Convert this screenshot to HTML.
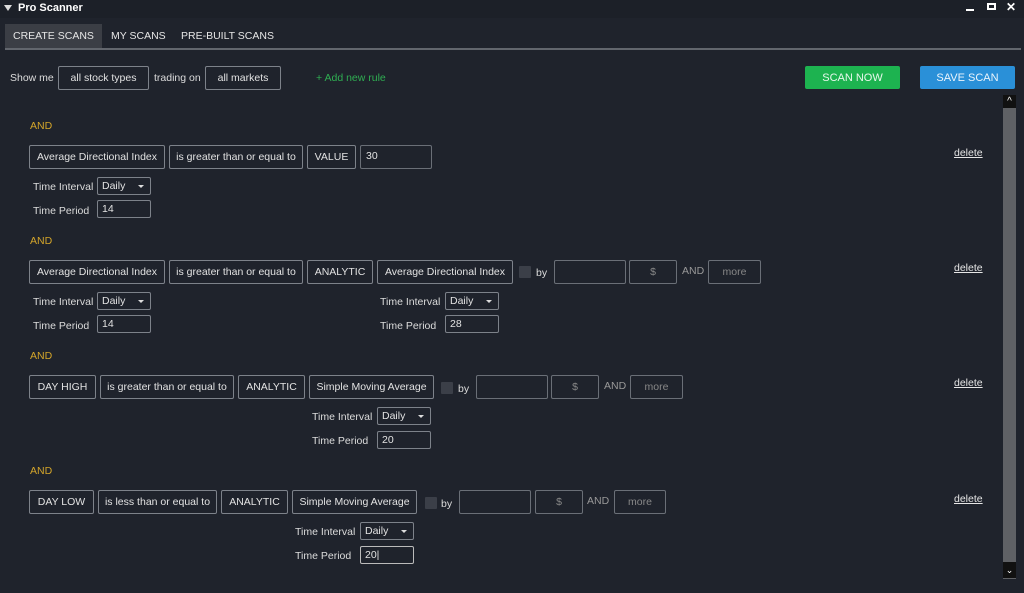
<!DOCTYPE html>
<html><head><style>
*{margin:0;padding:0;box-sizing:border-box}
body{width:1024px;height:593px;background:#1f232c;font-family:"Liberation Sans",sans-serif;color:#dcdcdc;font-size:10.5px;position:relative;overflow:hidden}
.a{position:absolute}
.b{position:absolute;border:1px solid #7d828a;border-radius:2px;height:24px;line-height:23px;text-align:center;white-space:nowrap;color:#e2e2e2}
.in{position:absolute;border:1px solid #6a6f77;border-radius:2px;height:24px;line-height:23px;text-align:center;color:#888}
.s{position:absolute;border:1px solid #7d828a;border-radius:2px;height:18px;line-height:17px;padding-left:4px;color:#e2e2e2;width:54px}
.s.sel:after{content:"";position:absolute;right:6px;top:7px;border-left:3px solid transparent;border-right:3px solid transparent;border-top:3px solid #ddd}
.l{position:absolute;color:#dcdcdc}
.and{position:absolute;color:#d4a52a;left:30px}
.cb{position:absolute;width:12px;height:12px;background:#3b3f48;border-radius:1px}
.del{position:absolute;left:954px;text-decoration:underline;color:#e6e6e6}
</style></head><body>
<div class="a" style="left:0;top:0;width:1024px;height:18px;background:#1c2028"></div>
<div class="a" style="left:4px;top:5px;border-left:4px solid transparent;border-right:4px solid transparent;border-top:6px solid #ddd"></div>
<div class="a" style="left:18px;top:2px;font-weight:bold;font-size:11px;color:#fff">Pro Scanner</div>
<div class="a" style="left:966px;top:9px;width:8px;height:2px;background:#fff"></div>
<div class="a" style="left:987px;top:3px;width:9px;height:7px;border:2px solid #fff"></div>
<div class="a" style="left:1006px;top:0px;color:#fff;font-weight:bold;font-size:12px">✕</div>
<div class="a" style="left:5px;top:24px;width:97px;height:24px;background:#3b3e45"></div>
<div class="a" style="left:13px;top:30px;color:#e6e6e6">CREATE SCANS</div>
<div class="a" style="left:111px;top:30px;color:#e6e6e6">MY SCANS</div>
<div class="a" style="left:181px;top:30px;color:#e6e6e6">PRE-BUILT SCANS</div>
<div class="a" style="left:5px;top:48px;width:1016px;height:2px;background:#62666d"></div>
<div class="l" style="left:10px;top:72px">Show me</div>
<div class="b" style="left:58px;top:66px;width:91px">all stock types</div>
<div class="l" style="left:154px;top:72px">trading on</div>
<div class="b" style="left:205px;top:66px;width:76px">all markets</div>
<div class="a" style="left:316px;top:72px;color:#2fae52">+ Add new rule</div>
<div class="a" style="left:805px;top:66px;width:95px;height:23px;background:#1db350;border-radius:2px;text-align:center;line-height:23px;padding-top:1px;color:#e8f8ec;font-size:11px">SCAN NOW</div>
<div class="a" style="left:920px;top:66px;width:95px;height:23px;background:#2a90d8;border-radius:2px;text-align:center;line-height:23px;padding-top:1px;color:#eaf4fc;font-size:11px">SAVE SCAN</div>
<div class="a" style="left:1003px;top:95px;width:13px;height:484px;background:#5f6165"></div>
<div class="a" style="left:1003px;top:95px;width:13px;height:13px;background:#111;color:#fff;text-align:center;font-size:10px;line-height:14px">&#94;</div>
<div class="a" style="left:1003px;top:562px;width:13px;height:16px;background:#111;color:#fff;text-align:center;font-size:9px;line-height:16px">&#8964;</div>

<div class="and" style="top:120px">AND</div>
<div class="b" style="left:29px;top:145px;width:136px">Average Directional Index</div>
<div class="b" style="left:169px;top:145px;width:134px">is greater than or equal to</div>
<div class="b" style="left:307px;top:145px;width:49px">VALUE</div>
<div class="in" style="left:360px;top:145px;width:72px;text-align:left;padding-left:5px;color:#e2e2e2;line-height:20px">30</div>
<div class="l" style="left:33px;top:181px">Time Interval</div><div class="s sel" style="left:97px;top:177px">Daily</div>
<div class="l" style="left:33px;top:205px">Time Period</div><div class="s" style="left:97px;top:200px">14</div>
<div class="del" style="top:147px">delete</div>

<div class="and" style="top:235px">AND</div>
<div class="b" style="left:29px;top:260px;width:136px">Average Directional Index</div>
<div class="b" style="left:169px;top:260px;width:134px">is greater than or equal to</div>
<div class="b" style="left:307px;top:260px;width:66px">ANALYTIC</div>
<div class="b" style="left:377px;top:260px;width:136px">Average Directional Index</div>
<div class="cb" style="left:519px;top:266px"></div><div class="l" style="left:536px;top:267px">by</div>
<div class="in" style="left:554px;top:260px;width:72px"></div>
<div class="in" style="left:629px;top:260px;width:48px">$</div>
<div class="l" style="left:682px;top:265px;color:#999">AND</div>
<div class="in" style="left:708px;top:260px;width:53px">more</div>
<div class="l" style="left:33px;top:296px">Time Interval</div><div class="s sel" style="left:97px;top:292px">Daily</div>
<div class="l" style="left:33px;top:320px">Time Period</div><div class="s" style="left:97px;top:315px">14</div>
<div class="l" style="left:380px;top:296px">Time Interval</div><div class="s sel" style="left:445px;top:292px">Daily</div>
<div class="l" style="left:380px;top:320px">Time Period</div><div class="s" style="left:445px;top:315px">28</div>
<div class="del" style="top:262px">delete</div>

<div class="and" style="top:350px">AND</div>
<div class="b" style="left:29px;top:375px;width:67px">DAY HIGH</div>
<div class="b" style="left:100px;top:375px;width:134px">is greater than or equal to</div>
<div class="b" style="left:238px;top:375px;width:67px">ANALYTIC</div>
<div class="b" style="left:309px;top:375px;width:125px">Simple Moving Average</div>
<div class="cb" style="left:441px;top:382px"></div><div class="l" style="left:458px;top:383px">by</div>
<div class="in" style="left:476px;top:375px;width:72px"></div>
<div class="in" style="left:551px;top:375px;width:48px">$</div>
<div class="l" style="left:604px;top:380px;color:#999">AND</div>
<div class="in" style="left:630px;top:375px;width:53px">more</div>
<div class="l" style="left:312px;top:411px">Time Interval</div><div class="s sel" style="left:377px;top:407px">Daily</div>
<div class="l" style="left:312px;top:435px">Time Period</div><div class="s" style="left:377px;top:431px">20</div>
<div class="del" style="top:377px">delete</div>

<div class="and" style="top:465px">AND</div>
<div class="b" style="left:29px;top:490px;width:65px">DAY LOW</div>
<div class="b" style="left:98px;top:490px;width:119px">is less than or equal to</div>
<div class="b" style="left:221px;top:490px;width:67px">ANALYTIC</div>
<div class="b" style="left:292px;top:490px;width:125px">Simple Moving Average</div>
<div class="cb" style="left:425px;top:497px"></div><div class="l" style="left:441px;top:498px">by</div>
<div class="in" style="left:459px;top:490px;width:72px"></div>
<div class="in" style="left:535px;top:490px;width:48px">$</div>
<div class="l" style="left:587px;top:495px;color:#999">AND</div>
<div class="in" style="left:614px;top:490px;width:52px">more</div>
<div class="l" style="left:295px;top:526px">Time Interval</div><div class="s sel" style="left:360px;top:522px">Daily</div>
<div class="l" style="left:295px;top:550px">Time Period</div><div class="s" style="left:360px;top:546px;border-color:#bbb">20|</div>
<div class="del" style="top:493px">delete</div>
</body></html>
